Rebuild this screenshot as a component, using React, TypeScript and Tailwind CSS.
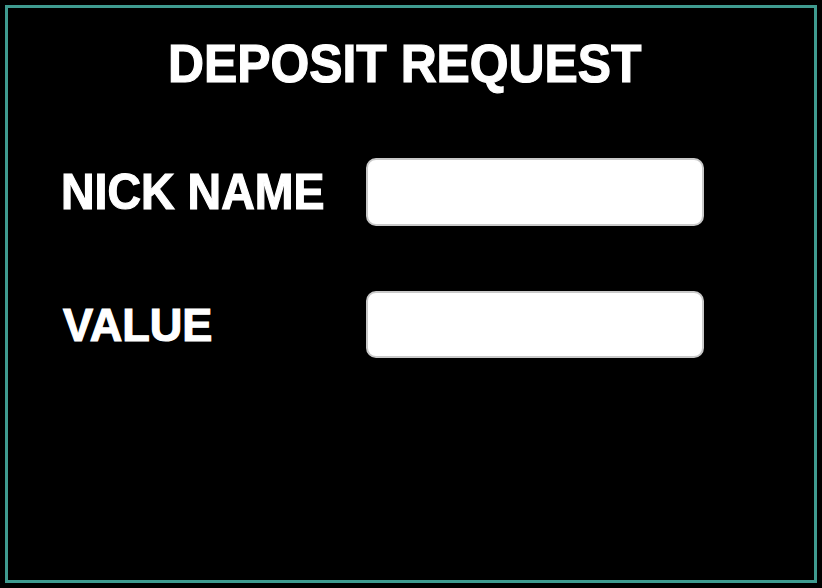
import React from "react";

export default function App() {
  return (
    <div className="w-[822px] h-[588px] bg-black p-[5px]" style={{ fontFamily: "'Liberation Sans', Arial, sans-serif" }}>
      <div className="h-full w-full border-[3px] border-[#3f9b90] flex flex-col">
        <div className="mt-[29px] flex justify-center pr-[12px]">
          <h1 className="text-white font-bold text-[53px] leading-none scale-x-[0.94] origin-center whitespace-nowrap [-webkit-text-stroke:1.2px_white]">
            DEPOSIT REQUEST
          </h1>
        </div>
        <div className="mt-[68px] flex items-center">
          <div className="w-[358px] pl-[53px] text-white font-bold text-[50px] leading-none">
            <span className="inline-block scale-x-[0.93] origin-left whitespace-nowrap [-webkit-text-stroke:1.2px_white]">NICK NAME</span>
          </div>
          <input className="w-[338px] h-[68px] bg-white border-2 border-[#c9c9c9] rounded-[10px] outline-none" />
        </div>
        <div className="mt-[65px] flex items-center">
          <div className="w-[358px] pl-[55px] text-white font-bold text-[46px] leading-none">
            <span className="inline-block scale-x-[0.98] origin-left whitespace-nowrap [-webkit-text-stroke:1.2px_white]">VALUE</span>
          </div>
          <input className="w-[338px] h-[67px] bg-white border-2 border-[#c9c9c9] rounded-[10px] outline-none" />
        </div>
      </div>
    </div>
  );
}
